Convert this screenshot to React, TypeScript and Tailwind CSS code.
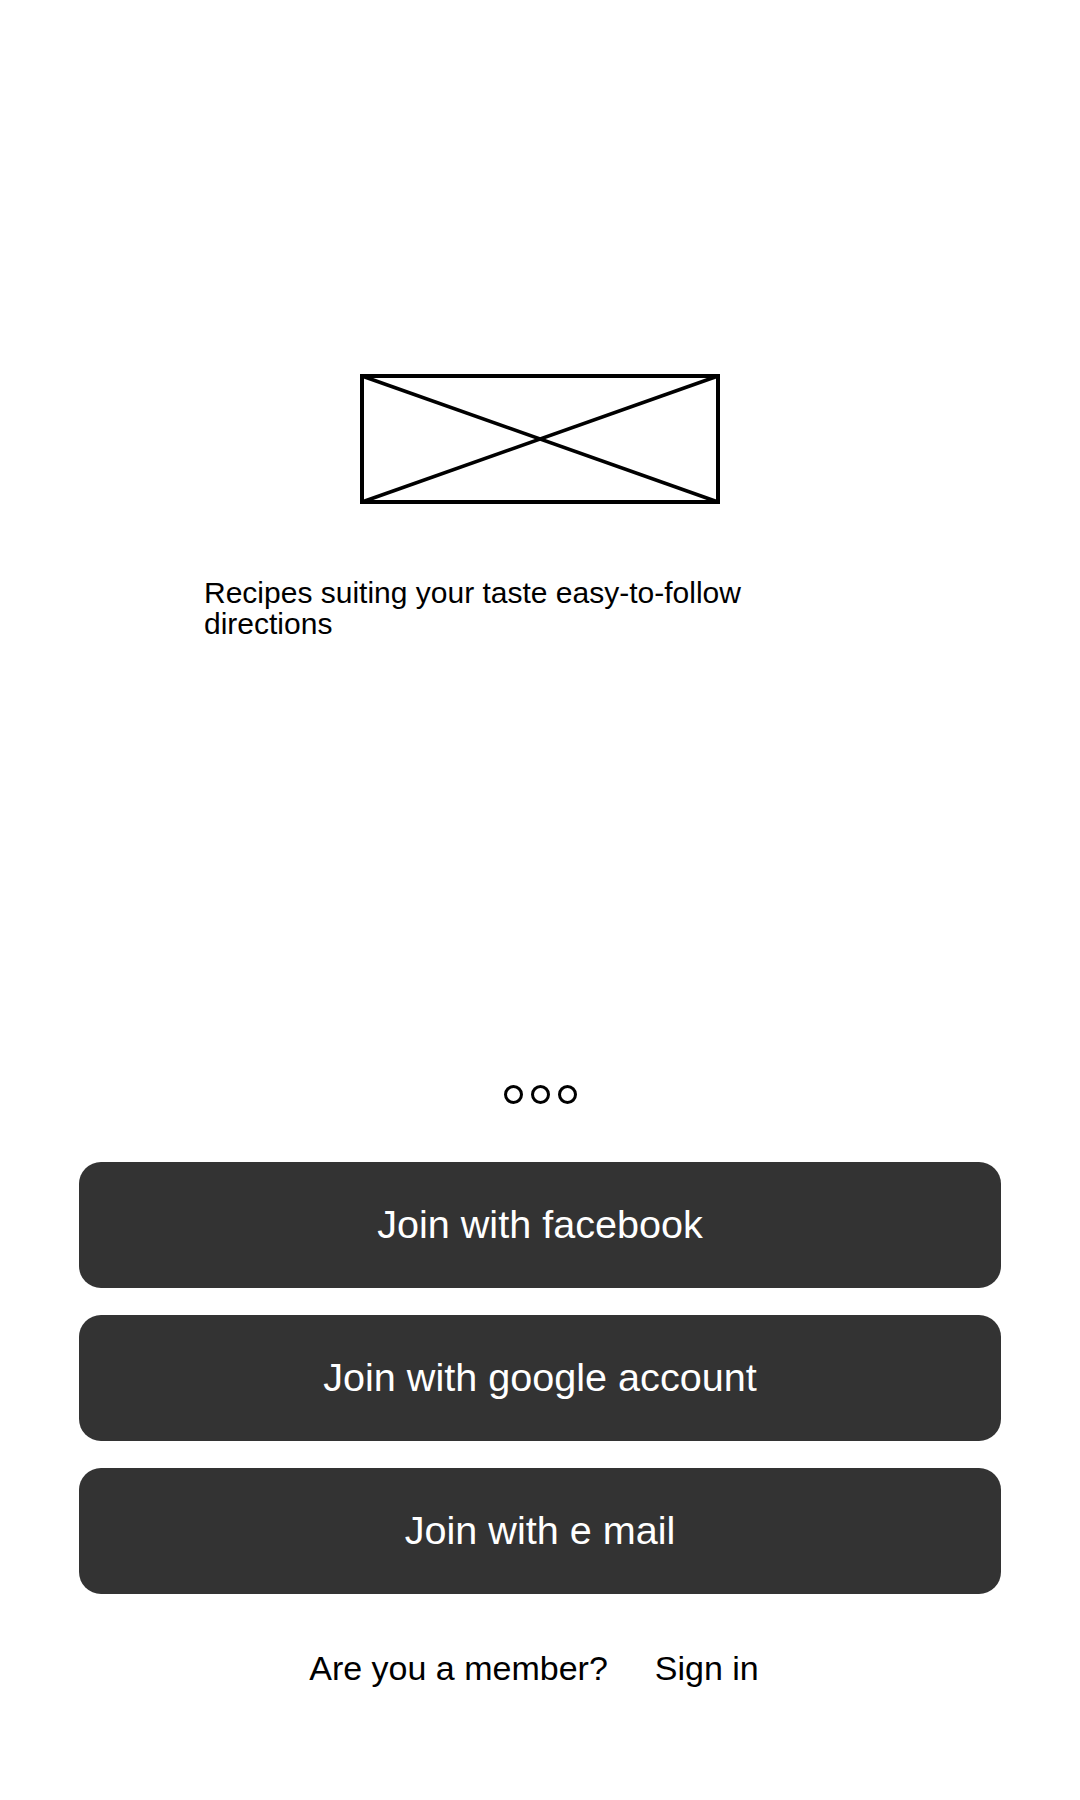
import React from "react";

const font = { fontFamily: '"Liberation Sans", Arial, sans-serif' };

function Placeholder() {
  return (
    <svg width="360" height="130" viewBox="0 0 360 130" className="block mx-auto">
      <rect x="2" y="2" width="356" height="126" fill="none" stroke="#000" strokeWidth="4" />
      <line x1="2" y1="2" x2="358" y2="128" stroke="#000" strokeWidth="3.5" />
      <line x1="2" y1="128" x2="358" y2="2" stroke="#000" strokeWidth="3.5" />
    </svg>
  );
}

function Dot() {
  return <div className="w-[19px] h-[19px] rounded-full border-[3px] border-black" />;
}

function JoinButton({ label }: { label: string }) {
  return (
    <button className="w-[922px] h-[126px] rounded-[22px] bg-[#333333] text-white text-[39.6px] flex items-center justify-center">
      {label}
    </button>
  );
}

export default function App() {
  return (
    <div className="w-[1080px] h-[1800px] bg-white flex flex-col pt-[374px]" style={font}>
      <Placeholder />
      <p className="ml-[204px] mt-[73px] w-[600px] text-[30px] leading-[31px] text-black">
        Recipes suiting your taste easy-to-follow directions
      </p>
      <div className="mt-[446px] flex justify-center gap-[8px]">
        <Dot />
        <Dot />
        <Dot />
      </div>
      <div className="mt-[58px] flex flex-col items-center gap-[27px]">
        <JoinButton label="Join with facebook" />
        <JoinButton label="Join with google account" />
        <JoinButton label="Join with e mail" />
      </div>
      <div className="mt-[55px] flex justify-center gap-[47px] pr-[12px] text-[34px] leading-[38px] text-black">
        <span>Are you a member?</span>
        <span>Sign in</span>
      </div>
    </div>
  );
}
